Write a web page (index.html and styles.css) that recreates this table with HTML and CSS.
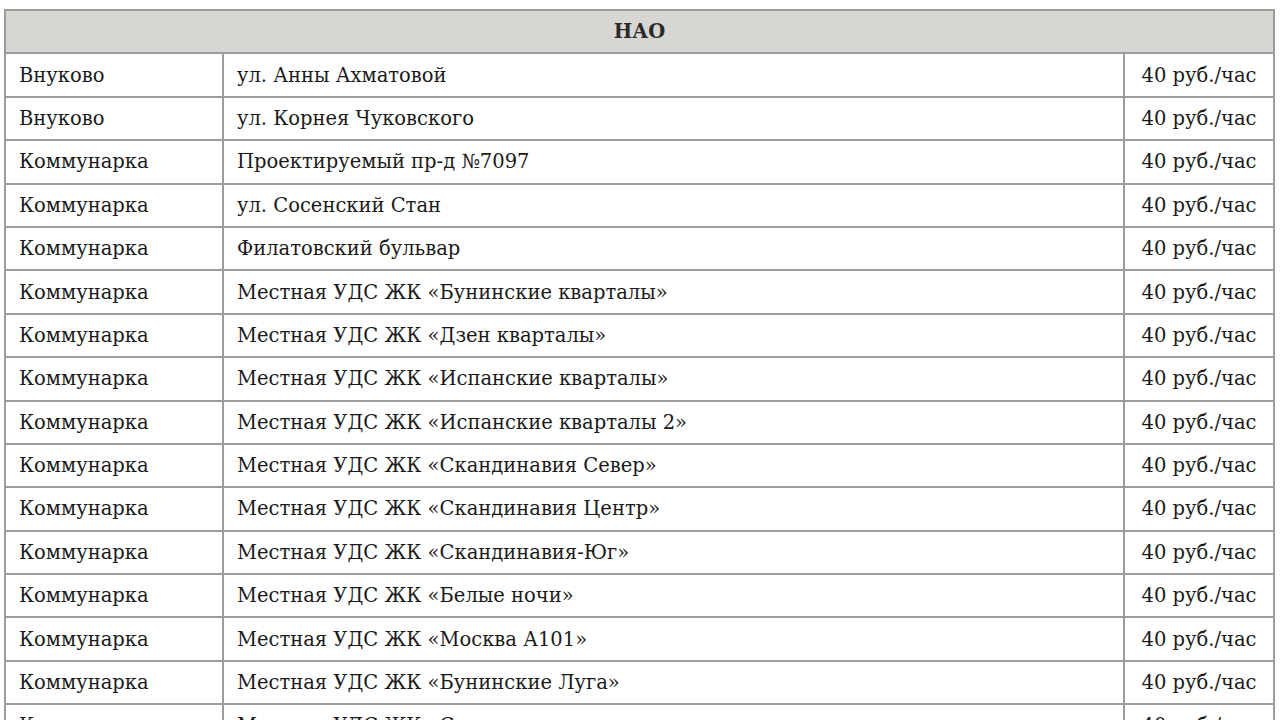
FILE: index.html
```html
<!DOCTYPE html>
<html lang="ru">
<head>
<meta charset="utf-8">
<title>НАО</title>
<link rel="stylesheet" href="styles.css">
</head>
<body>
<div class="page">
<table class="tariffs">
<colgroup><col class="c-area"><col class="c-street"><col class="c-price"></colgroup>
<thead>
<tr><th colspan="3">НАО</th></tr>
</thead>
<tbody>
<tr><td>Внуково</td><td>ул. Анны Ахматовой</td><td class="price">40 руб./час</td></tr>
<tr><td>Внуково</td><td>ул. Корнея Чуковского</td><td class="price">40 руб./час</td></tr>
<tr><td>Коммунарка</td><td>Проектируемый пр-д №7097</td><td class="price">40 руб./час</td></tr>
<tr><td>Коммунарка</td><td>ул. Сосенский Стан</td><td class="price">40 руб./час</td></tr>
<tr><td>Коммунарка</td><td>Филатовский бульвар</td><td class="price">40 руб./час</td></tr>
<tr><td>Коммунарка</td><td>Местная УДС ЖК «Бунинские кварталы»</td><td class="price">40 руб./час</td></tr>
<tr><td>Коммунарка</td><td>Местная УДС ЖК «Дзен кварталы»</td><td class="price">40 руб./час</td></tr>
<tr><td>Коммунарка</td><td>Местная УДС ЖК «Испанские кварталы»</td><td class="price">40 руб./час</td></tr>
<tr><td>Коммунарка</td><td>Местная УДС ЖК «Испанские кварталы 2»</td><td class="price">40 руб./час</td></tr>
<tr><td>Коммунарка</td><td>Местная УДС ЖК «Скандинавия Север»</td><td class="price">40 руб./час</td></tr>
<tr><td>Коммунарка</td><td>Местная УДС ЖК «Скандинавия Центр»</td><td class="price">40 руб./час</td></tr>
<tr><td>Коммунарка</td><td>Местная УДС ЖК «Скандинавия-Юг»</td><td class="price">40 руб./час</td></tr>
<tr><td>Коммунарка</td><td>Местная УДС ЖК «Белые ночи»</td><td class="price">40 руб./час</td></tr>
<tr><td>Коммунарка</td><td>Местная УДС ЖК «Москва А101»</td><td class="price">40 руб./час</td></tr>
<tr><td>Коммунарка</td><td>Местная УДС ЖК «Бунинские Луга»</td><td class="price">40 руб./час</td></tr>
<tr><td>Коммунарка</td><td>Местная УДС ЖК «Саларьево парк»</td><td class="price">40 руб./час</td></tr>
</tbody>
</table>
</div>
</body>
</html>
```
FILE: styles.css
```css
html, body {
  margin: 0;
  padding: 0;
  background: #ffffff;
  overflow: hidden;
}
.page {
  padding: 9px 5px 0 4px;
}
.tariffs {
  width: 100%;
  border-collapse: collapse;
  table-layout: fixed;
  font-family: "DejaVu Serif", "Liberation Serif", serif;
  font-size: 19.5px;
  color: #1a1a1a;
}
.c-area { width: 218px; }
.c-price { width: 150px; }
.tariffs th,
.tariffs td {
  border: 2px solid #9c9c9c;
  height: 41.4px;
  padding: 0 13px;
  text-align: left;
  vertical-align: middle;
  white-space: nowrap;
}
.tariffs th {
  background: #d7d6d2;
  text-align: center;
  font-weight: bold;
  color: #2a2a2a;
}
.tariffs td.price {
  text-align: center;
}
```
